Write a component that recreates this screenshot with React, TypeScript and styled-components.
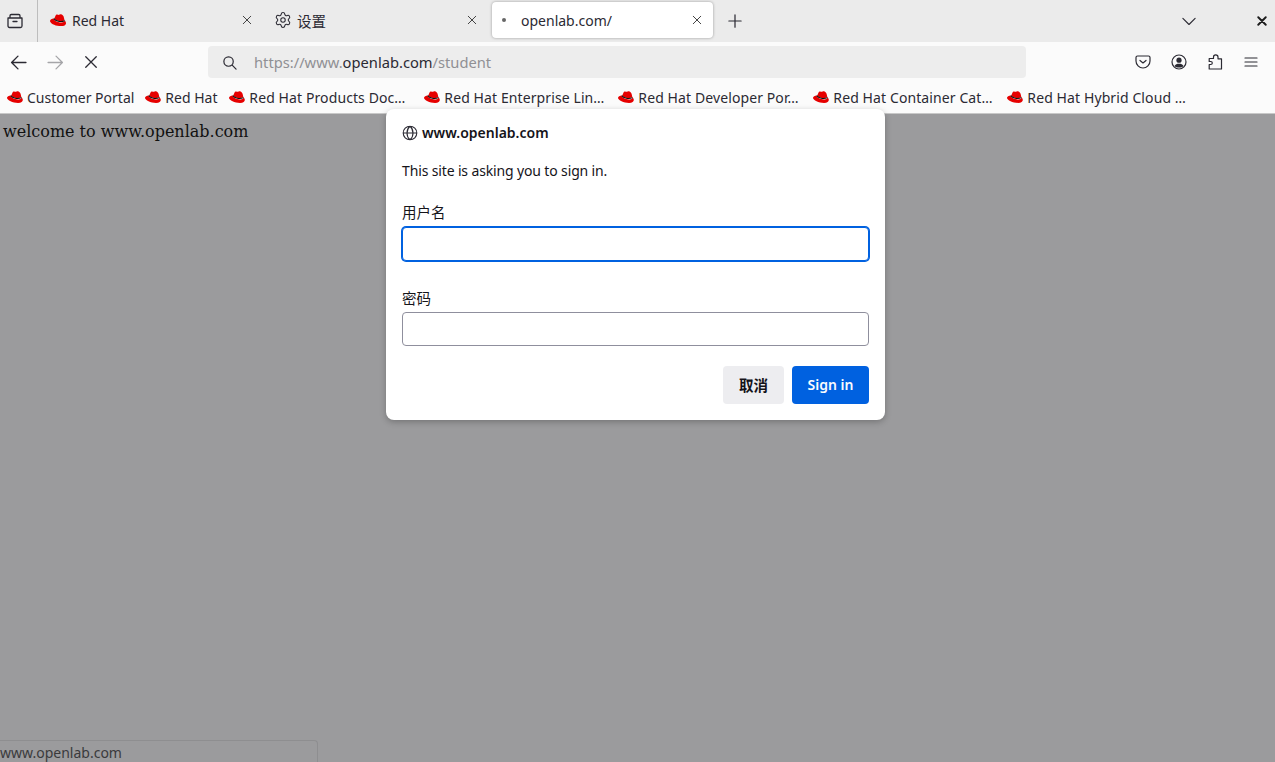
import React from "react";
import styled, { createGlobalStyle } from "styled-components";
import { Settings } from "lucide-react";

const Global = createGlobalStyle`
  html, body { margin: 0; padding: 0; height: 100%; overflow: hidden; }
  #root { height: 100%; }
  * { box-sizing: border-box; }
`;

const UI = `"Noto Sans", "Noto Sans CJK SC", sans-serif`;

const Win = styled.div`
  position: relative;
  width: 1275px;
  height: 762px;
  display: flex;
  flex-direction: column;
  font-family: ${UI};
  color: #2b2a33;
  overflow: hidden;
  background: #9b9b9d;
`;
const TabBar = styled.div`
  height: 42px;
  background: #ebebeb;
  display: flex;
  align-items: center;
  flex: none;
`;
const ListAll = styled.div`
  width: 38px;
  height: 42px;
  border-right: 1px solid #bdbdbd;
  display: flex;
  align-items: center;
  justify-content: center;
  padding-right: 8px;
  flex: none;
`;
const Tab = styled.div<{ $active?: boolean }>`
  width: ${(p) => (p.$active ? 221 : 225)}px;
  height: ${(p) => (p.$active ? 36 : 40)}px;
  margin-left: ${(p) => (p.$active ? 4 : 0)}px;
  margin-top: -2px;
  display: flex;
  align-items: center;
  padding: 0 11px 0 ${(p) => (p.$active ? 9 : 11)}px;
  font-size: 14px;
  background: ${(p) => (p.$active ? "#fff" : "transparent")};
  border-radius: 4px;
  box-shadow: ${(p) => (p.$active ? "0 0 3px rgba(0,0,0,.35)" : "none")};
  flex: none;
`;
const TabIcon = styled.span`
  width: 18px;
  display: flex;
  align-items: center;
  justify-content: center;
  flex: none;
`;
const TabTitle = styled.span<{ $tight?: boolean; $cjk?: boolean }>`
  flex: 1;
  margin-left: ${(p) => (p.$tight ? 2 : 5)}px;
  white-space: nowrap;
  font-size: ${(p) => (p.$cjk ? 14.5 : 14)}px;
`;
const LoadingDot = styled.svg`
  margin-left: -13px;
`;
const NewTab = styled.div`
  width: 42px;
  margin-left: 1px;
  display: flex;
  justify-content: center;
`;
const Spacer = styled.div`
  flex: 1;
`;
const TabEnd = styled.div`
  display: flex;
  align-items: center;
  gap: 61px;
  padding-right: 8px;
`;
const NavBar = styled.div`
  height: 40px;
  background: #fbfbfb;
  display: flex;
  align-items: center;
  flex: none;
  padding-left: 10px;
`;
const NavButtons = styled.div`
  width: 198px;
  display: flex;
  align-items: center;
  gap: 20px;
  flex: none;
`;
const UrlBar = styled.div`
  width: 818px;
  height: 32px;
  background: #ededed;
  border-radius: 4px;
  display: flex;
  align-items: center;
  padding-left: 14px;
  font-size: 14.7px;
  color: #909094;
  flex: none;
`;
const UrlText = styled.span`
  margin-left: 17px;
  b { font-weight: 400; color: #2b2a33; }
`;
const NavRight = styled.div`
  display: flex;
  align-items: center;
  gap: 20px;
  margin-left: 109px;
`;
const Bookmarks = styled.div`
  height: 32px;
  background: #fbfbfb;
  border-bottom: 1px solid #c8c8c8;
  display: flex;
  align-items: center;
  flex: none;
  padding: 0 0 1px 7px;
  font-size: 14px;
  gap: 11px;
`;
const Bookmark = styled.div<{ $w?: number; $cut?: boolean }>`
  display: flex;
  align-items: center;
  gap: 3.7px;
  white-space: nowrap;
  flex: none;
  letter-spacing: ${(p) => (p.$cut ? "0.1px" : "0")};
  width: ${(p) => (p.$w ? `${p.$w}px` : "auto")};
`;
const Content = styled.div`
  flex: 1;
  background: #9b9b9d;
  padding: 8px 3px;
  font-family: "DejaVu Serif", serif;
  font-size: 16px;
  line-height: 19px;
  color: #111;
`;
const Dialog = styled.div`
  position: absolute;
  left: 386px;
  top: 109px;
  width: 499px;
  height: 311px;
  background: #fff;
  border-radius: 8px;
  box-shadow: 0 2px 6px rgba(0, 0, 0, 0.25);
  padding: 15px 16px 16px;
  display: flex;
  flex-direction: column;
  font-size: 14px;
  color: #15141a;
`;
const Host = styled.div`
  display: flex;
  align-items: center;
  gap: 4px;
  font-weight: 600;
  font-size: 14px;
  line-height: 18px;
`;
const Message = styled.div`
  margin-top: 19px;
  line-height: 19px;
  letter-spacing: -0.14px;
`;
const FieldLabel = styled.label`
  display: block;
  font-size: 14.5px;
  line-height: 20px;
  margin-top: 22px;
`;
const Input = styled.input<{ $focus?: boolean }>`
  display: block;
  width: 467px;
  height: 34px;
  margin-top: 5px;
  background: #fff;
  border-radius: 4px;
  outline: none;
  border: 1px solid ${(p) => (p.$focus ? "#0061e0" : "#8f8f9d")};
  box-shadow: ${(p) => (p.$focus ? "0 0 0 1px #0061e0" : "none")};
`;
const Second = styled.div`
  margin-top: 5px;
  ${Input} { margin-top: 4px; }
`;
const Actions = styled.div`
  margin-top: 20px;
  display: flex;
  justify-content: flex-end;
  gap: 8px;
`;
const Button = styled.button<{ $primary?: boolean }>`
  height: 38px;
  width: ${(p) => (p.$primary ? 77 : 61)}px;
  border: none;
  border-radius: 4px;
  font-family: ${UI};
  font-weight: 600;
  font-size: ${(p) => (p.$primary ? 14 : 14.5)}px;
  padding: 0 0 2px;
  background: ${(p) => (p.$primary ? "#0061e0" : "#ededf0")};
  color: ${(p) => (p.$primary ? "#fbfbfe" : "#15141a")};
`;
const Status = styled.div`
  position: absolute;
  left: 0;
  bottom: 0;
  width: 318px;
  height: 22px;
  background: #9b9b9d;
  border: 1px solid #8e8e90;
  border-left: none;
  border-bottom: none;
  border-top-right-radius: 4px;
  font-size: 14px;
  line-height: 24px;
  color: #3a3a3c;
  white-space: nowrap;
`;

const Hat = ({ size = 16.3 }: { size?: number }) => (
  <svg width={size} height={(size * 13) / 17} viewBox="0 0 17 13" style={{ flex: "none" }}>
    <path
      d="M4.300 5 5.800 1.500C6.100.6 6.800.3 7.500.6c.7.3 1.200.4 1.800.2C10 .3 10.600 0 11.500.3c1.500.5 2.500 1.700 2.800 3.200l.7 3C13 8 6.500 7.600 4.300 5z"
      fill="#e60000"
    />
    <path
      d="M3.800 4.600C2 5 0 5.500 0 7.100c0 2.500 6 5.400 11.500 5.400 3.500 0 5-1.500 5-3 0-1-.7-2.300-1.500-3 .2 1.800-1.500 2.400-3.500 2.300C7.500 8.600 3.800 6.500 3.800 4.600z"
      fill="#e60000"
    />
    <path d="M3.800 4.800c2 2.500 7 4 11.400 2.100" fill="none" stroke="#111" strokeWidth="1.100" />
  </svg>
);

const Line = ({ d, size = 16, color = "#2b2a33", w = 1.3 }: { d: string; size?: number; color?: string; w?: number }) => (
  <svg width={size} height={size} viewBox="0 0 16 16" fill="none" stroke={color} strokeWidth={w} strokeLinecap="round" strokeLinejoin="round" style={{ flex: "none" }}>
    <path d={d} />
  </svg>
);

const X = () => <Line size={10} w={1.6} color="#444" d="M2 2 14 14M14 2 2 14" />;

const bookmarks: [string, number?, boolean?][] = [
  ["Customer Portal"],
  ["Red Hat", 73],
  ["Red Hat Products Doc…", 184, true],
  ["Red Hat Enterprise Lin…", 183, true],
  ["Red Hat Developer Por…", 184, true],
  ["Red Hat Container Cat…", 183, true],
  ["Red Hat Hybrid Cloud …", 180, true],
];

export default function App() {
  return (
    <Win>
      <Global />
      <TabBar>
        <ListAll>
          <Line d="M1 5h14v8a1.500 1.500 0 0 1-1.500 1.500h-11A1.500 1.500 0 0 1 1 13zM3 5V2.800A1.300 1.300 0 0 1 4.300 1.500h7.400A1.300 1.300 0 0 1 13 2.800V5M6 8.500h4" />
        </ListAll>
        <Tab>
          <TabIcon><Hat size={16.5} /></TabIcon>
          <TabTitle>Red Hat</TabTitle>
          <X />
        </Tab>
        <Tab>
          <TabIcon><Settings size={18} strokeWidth={1.4} color="#2b2a33" /></TabIcon>
          <TabTitle $cjk>设置</TabTitle>
          <X />
        </Tab>
        <Tab $active>
          <TabIcon>
            <LoadingDot width="6" height="6" viewBox="0 0 6 6"><circle cx="3" cy="3" r="2" fill="#666" /></LoadingDot>
          </TabIcon>
          <TabTitle $tight>openlab.com/</TabTitle>
          <X />
        </Tab>
        <NewTab><Line size={14} d="M8 1v14M1 8h14" w={1.4} /></NewTab>
        <Spacer />
        <TabEnd>
          <Line size={14} d="M1 5l7 7 7-7" w={1.3} />
          <Line size={10} d="M2 2 14 14M14 2 2 14" w={3} color="#1c1c1c" />
        </TabEnd>
      </TabBar>
      <NavBar>
        <NavButtons>
          <Line d="M15 8H1.500M7.500 2 1.500 8l6 6" size={17} w={1.3} />
          <Line d="M1 8h13.500M8.500 2l6 6-6 6" size={17} w={1.2} color="#a5a5a8" />
          <Line d="M2 2 14 14M14 2 2 14" size={14} w={1.5} />
        </NavButtons>
        <UrlBar>
          <Line d="M7 2a5 5 0 1 0 0 10A5 5 0 0 0 7 2zM10.600 10.600 15 15" size={15} w={1.3} />
          <UrlText>https://www.<b>openlab.com</b>/student</UrlText>
        </UrlBar>
        <NavRight>
          <Line d="M2.500 2h11A1.500 1.500 0 0 1 15 3.500V7A7 7 0 0 1 1 7V3.500A1.500 1.500 0 0 1 2.500 2zM5 6.500l3 2.500 3-2.500" w={1.2} />
          <svg width="16" height="16" viewBox="0 0 16 16" style={{ flex: "none" }}>
            <circle cx="8" cy="8" r="7" fill="none" stroke="#2b2a33" strokeWidth="1.200" />
            <circle cx="8" cy="6.200" r="2.600" fill="#2b2a33" />
            <path d="M3.500 12c.8-1.700 2.500-2.300 4.500-2.300s3.700.6 4.500 2.300C11.500 13 10 13.500 8 13.500S4.500 13 3.500 12z" fill="#2b2a33" />
          </svg>
          <Line w={1.2} d="M2.200 4.500H6.500V3C6.500 1.500 7.500.8 8.700.8S11 1.500 11 3V4.800H14.500V15H2.200V10.500H3.700C5 10.500 5.300 9.700 5.300 9S5 7.500 3.700 7.500H2.200Z" />
          <Line d="M2 4h12M2 8h12M2 12h12" w={1.2} size={16} />
        </NavRight>
      </NavBar>
      <Bookmarks>
        {bookmarks.map(([t, w, cut]) => (
          <Bookmark key={t} $w={w} $cut={cut}><Hat />{t}</Bookmark>
        ))}
      </Bookmarks>
      <Content>welcome to www.openlab.com</Content>
      <Dialog>
        <Host>
          <Line size={16} w={1.1} d="M8 1.200a6.800 6.800 0 1 0 0 13.600A6.800 6.800 0 0 0 8 1.200zM1.200 8h13.600M8 1.200C5.800 3 5 5.500 5 8s.8 5 3 6.800c2.200-1.800 3-4.300 3-6.800s-.8-5-3-6.800z" />
          www.openlab.com
        </Host>
        <Message>This site is asking you to sign in.</Message>
        <FieldLabel>用户名</FieldLabel>
        <Input $focus />
        <Second>
          <FieldLabel>密码</FieldLabel>
          <Input type="password" />
        </Second>
        <Actions>
          <Button>取消</Button>
          <Button $primary>Sign in</Button>
        </Actions>
      </Dialog>
      <Status>www.openlab.com</Status>
    </Win>
  );
}
